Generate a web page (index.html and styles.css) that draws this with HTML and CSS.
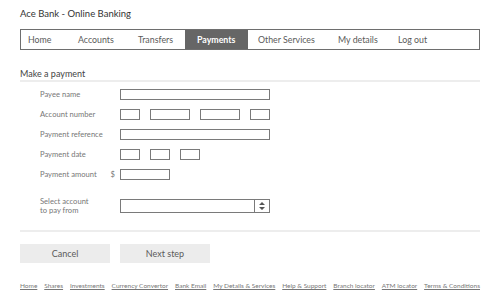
FILE: index.html
```html
<!DOCTYPE html>
<html>
<head>
<meta charset="utf-8">
<link rel="stylesheet" href="styles.css">
</head>
<body>
<div class="page">
  <h1 class="title">Ace Bank - Online Banking</h1>
  <nav class="nav">
    <a class="nav-item i-home">Home</a>
    <a class="nav-item i-accounts">Accounts</a>
    <a class="nav-item i-transfers">Transfers</a>
    <a class="nav-item i-payments active">Payments</a>
    <a class="nav-item i-other">Other Services</a>
    <a class="nav-item i-details">My details</a>
    <a class="nav-item i-logout">Log out</a>
  </nav>

  <h2 class="section">Make a payment</h2>

  <div class="form">
    <div class="row">
      <div class="label">Payee name</div>
      <div class="fields"><span class="box w150"></span></div>
    </div>
    <div class="row">
      <div class="label">Account number</div>
      <div class="fields"><span class="box w20"></span><span class="box w40"></span><span class="box w40"></span><span class="box w20"></span></div>
    </div>
    <div class="row">
      <div class="label">Payment reference</div>
      <div class="fields"><span class="box w150"></span></div>
    </div>
    <div class="row">
      <div class="label">Payment date</div>
      <div class="fields"><span class="box w20"></span><span class="box w20"></span><span class="box w20"></span></div>
    </div>
    <div class="row">
      <div class="label label-amount"><span>Payment amount</span><span class="currency">$</span></div>
      <div class="fields"><span class="box w50"></span></div>
    </div>
    <div class="row row-select">
      <div class="label">Select account<br>to pay from</div>
      <div class="fields">
        <span class="select">
          <span class="select-arrows">
            <svg width="8" height="10" viewBox="0 0 8 10"><path d="M4 1 L7 4 L1 4 Z M4 9 L7 6 L1 6 Z" fill="#555"/></svg>
          </span>
        </span>
      </div>
    </div>
  </div>

  <div class="divider"></div>

  <div class="buttons">
    <span class="btn">Cancel</span>
    <span class="btn">Next step</span>
  </div>

  <footer class="footer">
    <a>Home</a>
    <a>Shares</a>
    <a>Investments</a>
    <a>Currency Convertor</a>
    <a>Bank Email</a>
    <a>My Details &amp; Services</a>
    <a>Help &amp; Support</a>
    <a>Branch locator</a>
    <a>ATM locator</a>
    <a>Terms &amp; Conditions</a>
  </footer>
</div>
</body>
</html>
```
FILE: styles.css
```css
* { box-sizing: border-box; }
html, body { margin: 0; padding: 0; background: #fff; }
body { font-family: Lato, "Open Sans", sans-serif; color: #555; }
.page { padding: 0 20px; width: 500px; }

.title {
  margin: 0;
  padding-top: 7px;
  font-size: 9.5px;
  line-height: 14px;
  font-weight: normal;
  color: #333;
}

.nav {
  margin-top: 8px;
  height: 21px;
  border: 1px solid #6e6e6e;
  display: flex;
  align-items: stretch;
  font-size: 8.8px;
}
.nav-item {
  display: flex;
  align-items: center;
  color: #5a5a5a;
  white-space: nowrap;
}
.i-home { width: 44px; padding-left: 7px; }
.i-accounts { width: 60px; padding-left: 13px; }
.i-transfers { width: 60px; padding-left: 13px; }
.i-payments { width: 63px; padding-left: 12px; }
.i-other { width: 77px; padding-left: 10px; }
.i-details { width: 62px; padding-left: 13px; }
.i-logout { flex: 1; padding-left: 11px; }
.nav-item.active {
  background: #666;
  color: #fff;
  font-weight: bold;
}

.section {
  margin: 18px 0 0;
  font-size: 9px;
  line-height: 12px;
  font-weight: normal;
  color: #444;
  border-bottom: 2px solid #ededed;
}

.form { margin-top: 2px; padding-left: 20px; }
.row {
  display: flex;
  align-items: center;
  height: 20px;
}
.row-select { height: 28px; margin-top: 8px; }
.label {
  width: 80px;
  font-size: 7.6px;
  line-height: 9px;
  color: #777;
}
.label-amount { display: flex; justify-content: space-between; padding-right: 5px; }
.fields { display: flex; gap: 10px; }
.box {
  display: block;
  height: 11px;
  border: 1px solid #7a7a7a;
}
.w20 { width: 20px; }
.w40 { width: 40px; }
.w50 { width: 50px; }
.w150 { width: 150px; }
.select {
  display: flex;
  justify-content: flex-end;
  width: 150px;
  height: 14px;
  border: 1px solid #7a7a7a;
}
.select-arrows {
  width: 15px;
  border-left: 1px solid #7a7a7a;
  display: flex;
  align-items: center;
  justify-content: center;
}

.divider { margin-top: 10px; height: 2px; background: #ededed; }

.buttons { margin-top: 12px; display: flex; gap: 10px; }
.btn {
  width: 90px;
  height: 19px;
  background: #ececec;
  display: flex;
  align-items: center;
  justify-content: center;
  font-size: 9px;
  color: #5a5a5a;
}

.footer {
  margin-top: 18px;
  display: flex;
  justify-content: space-between;
  font-size: 6.5px;
  line-height: 10px;
}
.footer a { color: #777; text-decoration: underline; }
```
